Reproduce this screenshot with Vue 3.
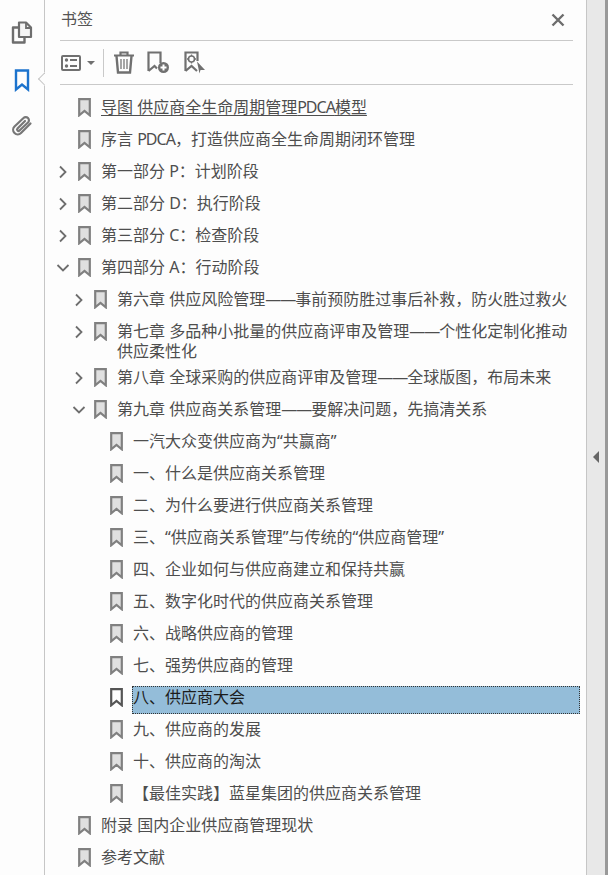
<script setup>
const items = [
  { t: '导图 供应商全生命周期管理PDCA模型', l: 0, u: true },
  { t: '序言 PDCA，打造供应商全生命周期闭环管理', l: 0 },
  { t: '第一部分 P：计划阶段', l: 0, c: 'r' },
  { t: '第二部分 D：执行阶段', l: 0, c: 'r' },
  { t: '第三部分 C：检查阶段', l: 0, c: 'r' },
  { t: '第四部分 A：行动阶段', l: 0, c: 'd' },
  { t: '第六章 供应风险管理——事前预防胜过事后补救，防火胜过救火', l: 1, c: 'r' },
  { t: '第七章 多品种小批量的供应商评审及管理——个性化定制化推动供应柔性化', l: 1, c: 'r' },
  { t: '第八章 全球采购的供应商评审及管理——全球版图，布局未来', l: 1, c: 'r' },
  { t: '第九章 供应商关系管理——要解决问题，先搞清关系', l: 1, c: 'd' },
  { t: '一汽大众变供应商为“共赢商”', l: 2 },
  { t: '一、什么是供应商关系管理', l: 2 },
  { t: '二、为什么要进行供应商关系管理', l: 2 },
  { t: '三、“供应商关系管理”与传统的“供应商管理”', l: 2 },
  { t: '四、企业如何与供应商建立和保持共赢', l: 2 },
  { t: '五、数字化时代的供应商关系管理', l: 2 },
  { t: '六、战略供应商的管理', l: 2 },
  { t: '七、强势供应商的管理', l: 2 },
  { t: '八、供应商大会', l: 2, s: true },
  { t: '九、供应商的发展', l: 2 },
  { t: '十、供应商的淘汰', l: 2 },
  { t: '【最佳实践】蓝星集团的供应商关系管理', l: 2 },
  { t: '附录 国内企业供应商管理现状', l: 0 },
  { t: '参考文献', l: 0 },
]
const parts = (text) => text.split(/(PDCA|——|供应柔性化)/).filter(Boolean)
const tight = (part) => part === 'PDCA' || part === '——'
</script>

<template>
  <div class="app">
    <aside class="rail">
      <svg class="rail-icon first" width="22" height="24" viewBox="0 0 22 24">
        <path d="M8 1.500h7l5 5V16h-12z" fill="#f5f5f5" stroke="#6e6e6e" stroke-width="2.200" stroke-linejoin="round" />
        <path d="M15 2v5h5" fill="none" stroke="#6e6e6e" stroke-width="1.800" />
        <path d="M7.500 6.500H2V21.500h11.500V16.500" fill="none" stroke="#6e6e6e" stroke-width="2.400" stroke-linejoin="round" />
      </svg>
      <svg class="rail-icon mark" width="16" height="23" viewBox="0 0 16 23">
        <path d="M2 1.500H14V20.500L8 15.500L2 20.500Z" fill="#fdfdfd" stroke="#1c73cd" stroke-width="2.400" stroke-linejoin="miter" />
      </svg>
      <svg class="rail-icon clip" width="22" height="22" viewBox="0 0 22 22">
        <path d="M19.500 8.500L10 18a4.500 4.500 0 0 1-6.500-6.500L12.500 3a3 3 0 0 1 4.500 4.500L8.500 15.500a1.400 1.400 0 0 1-2-2L14 6" fill="none" stroke="#777" stroke-width="2.200" stroke-linecap="round" />
      </svg>
      <span class="notch"></span>
    </aside>

    <main class="panel">
      <header class="title">
        <span class="title-text">书签</span>
        <svg width="14" height="14" viewBox="0 0 14 14">
          <path d="M1.500 1.500L12.500 12.500M12.500 1.500L1.500 12.500" stroke="#6d6d6d" stroke-width="2.400" />
        </svg>
      </header>

      <div class="tools">
        <svg width="20" height="16" viewBox="0 0 20 16">
          <rect x="1" y="1" width="18" height="14" rx="1" fill="none" stroke="#707070" stroke-width="2" />
          <circle cx="5.500" cy="5" r="1.700" fill="#707070" />
          <circle cx="5.500" cy="11" r="1.700" fill="#707070" />
          <path d="M9 5h7M9 11h7" stroke="#707070" stroke-width="2" />
        </svg>
        <span class="caret"></span>
        <span class="sep"></span>
        <svg class="trash" width="22" height="23" viewBox="0 0 22 23">
          <path d="M1 4.500H21M7.500 4V1.500H14.500V4" fill="none" stroke="#707070" stroke-width="2.200" />
          <path d="M3.500 5L5 21.500H17L18.500 5" fill="none" stroke="#707070" stroke-width="2.400" />
          <path d="M8 8V18M11 8V18M14 8V18" stroke="#808080" stroke-width="1.400" />
        </svg>
        <svg class="add" width="23" height="23" viewBox="0 0 23 23">
          <path d="M1.500 20V1.500H13.500V12M1.500 20L7.500 15L10 17.500" fill="none" stroke="#707070" stroke-width="2.200" />
          <circle cx="16.500" cy="16.500" r="5.500" fill="#707070" />
          <path d="M13.500 16.500H19.500M16.500 13.500V19.500" stroke="#fff" stroke-width="2" />
        </svg>
        <svg class="prop" width="22" height="23" viewBox="0 0 22 23">
          <path d="M1.500 20V1.500H13.500V10M1.500 20L7.500 15L13 20" fill="none" stroke="#707070" stroke-width="2.200" />
          <circle cx="7.500" cy="8" r="3" fill="none" stroke="#707070" stroke-width="1.600" />
          <path d="M7.500 3.500V5M7.500 11V12.500M3 8H4.500M10.500 8H12" stroke="#707070" stroke-width="1.300" />
          <path d="M13 10.500L21 19H16.500L15.500 22.500Z" fill="#707070" />
        </svg>
      </div>

      <ul class="tree">
        <li v-for="item in items" :key="item.t" :class="['row', 'level-' + item.l]">
          <span class="chev">
            <svg v-if="item.c === 'r'" class="chev-r" width="10" height="14" viewBox="0 0 10 14">
              <path d="M2 1.500L7.500 7L2 12.500" fill="none" stroke="#6e6e6e" stroke-width="1.800" />
            </svg>
            <svg v-else-if="item.c === 'd'" width="14" height="10" viewBox="0 0 14 10">
              <path d="M1.500 2L7 7.500L12.500 2" fill="none" stroke="#6e6e6e" stroke-width="1.800" />
            </svg>
          </span>
          <svg class="mark-icon" width="13" height="19" viewBox="0 0 13 19">
            <path
              d="M1.200 1.200H11.800V17.300L6.500 13L1.200 17.300Z"
              :fill="item.s ? '#fdfdfd' : '#e0e0e0'"
              :stroke="item.s ? '#555' : '#808080'"
              stroke-width="2.200"
            />
          </svg>
          <span :class="['label', { under: item.u, sel: item.s }]"><span v-for="(part, i) in parts(item.t)" :key="i" :class="{ tight: tight(part) }">{{ part }}</span></span>
        </li>
      </ul>
    </main>

    <div class="strip">
      <span class="arrow"></span>
    </div>
    <div class="edge"></div>
  </div>
</template>

<style>
html, body { margin: 0; overflow: hidden; }
</style>

<style scoped>
.app {
  display: flex;
  width: 608px;
  height: 875px;
  overflow: hidden;
  background: #fdfdfd;
  font-family: "Noto Sans", "Noto Sans CJK SC", sans-serif;
  color: #4e4e4e;
}
.rail {
  position: relative;
  flex: none;
  width: 44px;
  border-right: 1px solid #c6c6c6;
  display: flex;
  flex-direction: column;
  align-items: center;
}
.rail-icon.first { margin-top: 21px; margin-left: -1px; }
.rail-icon.mark { margin-top: 24px; margin-left: -1px; }
.rail-icon.clip { margin-top: 23px; margin-left: -1px; }
.notch {
  position: absolute;
  right: -1px;
  top: 72px;
  width: 8px;
  height: 14px;
  background: #fdfdfd;
  overflow: hidden;
}
.notch::before {
  content: "";
  position: absolute;
  left: 3px;
  top: 1.500px;
  width: 9px;
  height: 9px;
  border-left: 1px solid #c6c6c6;
  border-bottom: 1px solid #c6c6c6;
  transform: rotate(45deg);
}
.panel {
  flex: 1;
  min-width: 0;
  display: flex;
  flex-direction: column;
  background: #fdfdfd;
}
.title {
  margin: 0 13px 0 15px;
  height: 40px;
  border-bottom: 1px solid #c9c9c9;
  display: flex;
  align-items: center;
  justify-content: space-between;
  padding-right: 8px;
}
.title-text {
  font-size: 16px;
  line-height: 20px;
  margin-bottom: 2px;
  margin-left: 1px;
  color: #555;
}
.tools {
  margin: 0 13px 0 15px;
  height: 43px;
  border-bottom: 1px solid #c9c9c9;
  display: flex;
  align-items: center;
  padding-left: 1px;
}
.caret {
  margin-left: 6px;
  width: 0;
  height: 0;
  border-left: 4px solid transparent;
  border-right: 4px solid transparent;
  border-top: 4px solid #707070;
}
.sep {
  width: 1px;
  height: 28px;
  background: #c9c9c9;
  margin-left: 8px;
}
.trash { margin-left: 9px; }
.add { margin-left: 12px; }
.prop { margin-left: 14px; }
.tree {
  list-style: none;
  margin: 6px 0 0;
  padding: 0 6px 0 0;
}
.row {
  display: flex;
  align-items: flex-start;
  box-sizing: border-box;
  min-height: 32px;
  padding-top: 6px;
  padding-left: 11px;
}
.row.level-1 { padding-left: 27px; }
.row.level-2 { padding-left: 43px; }
.chev {
  flex: none;
  width: 22px;
  height: 20px;
  display: flex;
  align-items: center;
  margin-top: 1px;
}
.chev-r { margin-left: 2px; }
.mark-icon {
  flex: none;
  margin-top: 1px;
}
.label {
  flex: 1;
  min-width: 0;
  margin-left: 9px;
  padding-left: 1px;
  font-size: 16px;
  line-height: 20px;
}
.tight { letter-spacing: -1px; }
.label.under {
  text-decoration: underline;
  text-underline-offset: 2px;
}
.label.sel {
  margin-top: -1px;
  margin-bottom: -1px;
  padding: 1px 0 7px 1px;
  background: #94bdd9;
  outline: 1px dotted #333;
  outline-offset: -1px;
  color: #1c1c1c;
}
.strip {
  position: relative;
  flex: none;
  width: 19px;
  background: #e8e8e8;
  border-left: 1px solid #c6c6c6;
  box-sizing: border-box;
  display: flex;
  align-items: center;
  justify-content: center;
}
.arrow {
  width: 0;
  height: 0;
  border-top: 6px solid transparent;
  border-bottom: 6px solid transparent;
  border-right: 6px solid #666;
  margin-top: 39px;
}
.edge {
  flex: none;
  width: 3px;
  background: #999;
}
</style>
